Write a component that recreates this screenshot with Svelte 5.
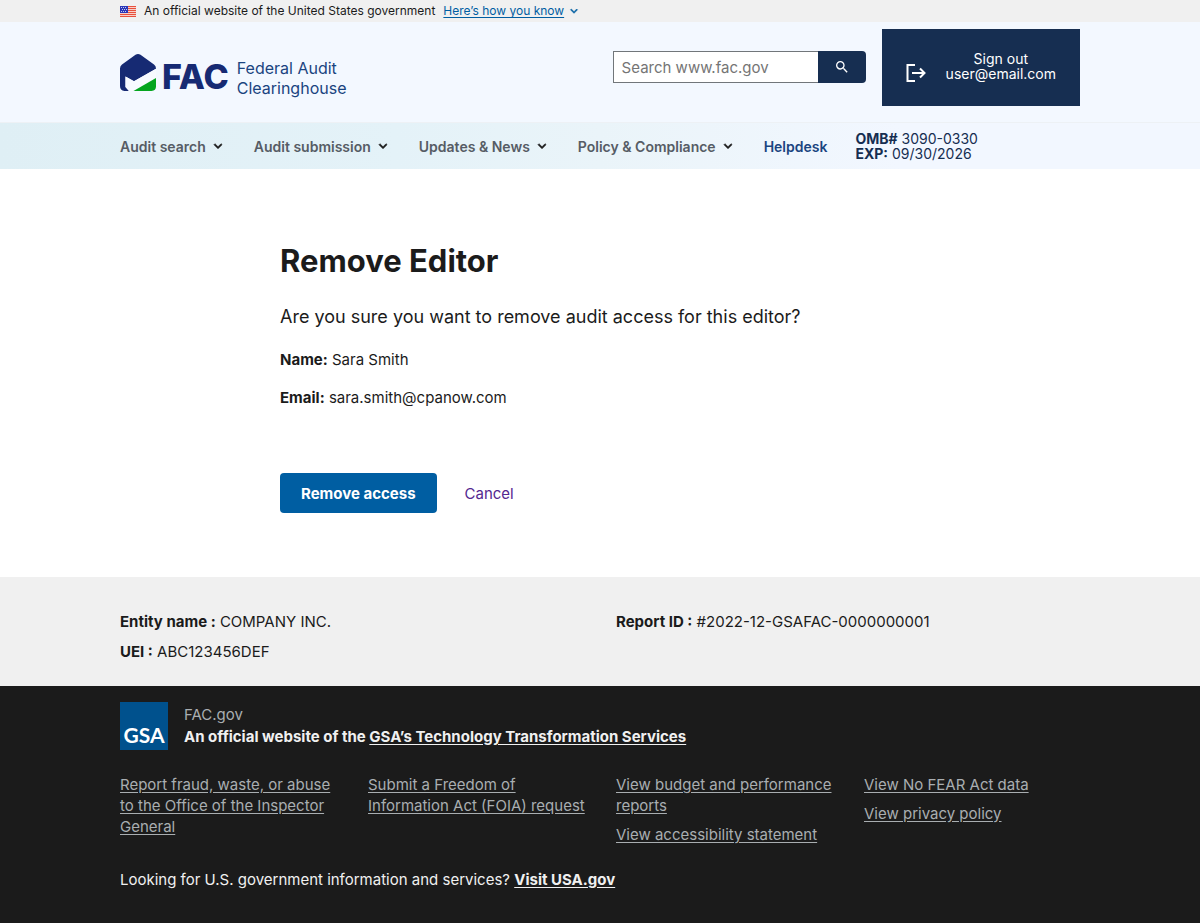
<script>
  const menus = ['Audit search', 'Audit submission', 'Updates & News', 'Policy & Compliance'];

  const footerColumns = [
    ['Report fraud, waste, or abuse to the Office of the Inspector General'],
    ['Submit a Freedom of Information Act (FOIA) request'],
    ['View budget and performance reports', 'View accessibility statement'],
    ['View No FEAR Act data', 'View privacy policy']
  ];
</script>

{#snippet chevron(size)}
  <svg class="chevron" width={size} height={size} viewBox="0 0 24 24" aria-hidden="true">
    <path d="M16.59 8.59 12 13.17 7.41 8.59 6 10l6 6 6-6z" fill="currentColor" stroke="currentColor" stroke-width="1" />
  </svg>
{/snippet}

<section class="banner" aria-label="Official website of the United States government">
  <div class="container banner-row">
    <svg class="flag" width="16" height="11" viewBox="0 0 16 11" aria-hidden="true">
      <rect width="16" height="11" fill="#f7cfc8" />
      {#each [0, 2, 4, 6, 8, 10] as y}
        <rect {y} width="16" height="1" fill="#e8503c" />
      {/each}
      <rect width="8" height="7" fill="#2a37b8" />
      {#each [1, 3, 5] as y}
        {#each [1, 3, 5] as x}
          <rect x={x + (y === 3 ? 1 : 0)} {y} width="1" height="1" fill="#c5caf0" />
        {/each}
      {/each}
    </svg>
    <span>An official website of the United States government</span>
    <button class="how" type="button"><span>Here’s how you know</span>{@render chevron(14)}</button>
  </div>
</section>

<header class="header">
  <div class="container header-row">
    <a class="brand" href="#home">
      <svg width="36" height="37" viewBox="0 0 36 37" aria-hidden="true">
        <path d="M15.5.8Q18-.8 20.500.8L34 10.500Q36 12 36 14.500V14.800L14 27.200 5.500 22.600V33L9 37H4.500Q0 36.500 0 32V14.500Q0 12 2 10.500Z" fill="#162a73" />
        <path d="M5.500 22.600 14 27.200 36 14.800V24L13.500 37H9L5.500 33Z" fill="#f7faff" />
        <path d="M36 24V32.500Q36 36.500 31.500 37H13.500Z" fill="#04a51f" />
      </svg>
      <span class="mark">FAC</span>
      <span class="brand-name">Federal Audit<br />Clearinghouse</span>
    </a>
    <form class="search" role="search" onsubmit={(e) => e.preventDefault()}>
      <input type="search" aria-label="Search www.fac.gov" placeholder="Search www.fac.gov" />
      <button type="submit" aria-label="Search">
        <svg width="16" height="16" viewBox="0 0 24 24" aria-hidden="true">
          <path fill="#fff" d="M15.500 14h-.79l-.28-.27A6.470 6.470 0 0 0 16 9.500 6.500 6.500 0 1 0 9.500 16c1.610 0 3.090-.59 4.230-1.570l.27.28v.79l5 4.990L20.490 19l-4.990-5zm-6 0C7.010 14 5 11.990 5 9.500S7.010 5 9.500 5 14 7.010 14 9.500 11.990 14 9.500 14z" />
        </svg>
      </button>
    </form>
    <button class="signout" type="button">
      <svg width="20" height="18" viewBox="0 0 20 18" fill="none" stroke="#fff" stroke-width="2" aria-hidden="true">
        <path d="M9 1H1.500V17H9" />
        <path d="M6 9H18" />
        <path d="M14 4.500 18.500 9 14 13.500" />
      </svg>
      <span>Sign out<br />user@email.com</span>
    </button>
  </div>
</header>

<nav class="nav" aria-label="Primary">
  <div class="container nav-row">
    {#each menus as menu}
      <button type="button" aria-expanded="false"><span>{menu}</span>{@render chevron(16)}</button>
    {/each}
    <a href="#helpdesk">Helpdesk</a>
    <p class="omb"><b>OMB#</b> 3090-0330<br /><b>EXP:</b> 09/30/2026</p>
  </div>
</nav>

<main>
  <div class="container">
    <div class="content">
      <h1>Remove Editor</h1>
      <p class="lead">Are you sure you want to remove audit access for this editor?</p>
      <p><b>Name:</b> Sara Smith</p>
      <p><b>Email:</b> sara.smith@cpanow.com</p>
      <div class="actions">
        <button type="button">Remove access</button>
        <a href="#cancel">Cancel</a>
      </div>
    </div>
  </div>
</main>

<section class="entity" aria-label="Submission details">
  <div class="container entity-grid">
    <div>
      <p><b>Entity name :</b> COMPANY INC.</p>
      <p><b>UEI :</b> ABC123456DEF</p>
    </div>
    <div>
      <p><b>Report ID :</b> #2022-12-GSAFAC-0000000001</p>
    </div>
  </div>
</section>

<footer>
  <div class="container">
    <div class="identity">
      <div class="gsa">
        <span>GSA</span>
      </div>
      <div>
        <p class="domain">FAC.gov</p>
        <p class="agency">An official website of the <a href="#tts">GSA’s Technology Transformation Services</a></p>
      </div>
    </div>
    <div class="links">
      {#each footerColumns as column}
        <ul>
          {#each column as link}
            <li><a href="#link">{link}</a></li>
          {/each}
        </ul>
      {/each}
    </div>
    <p class="usa">Looking for U.S. government information and services? <a href="#usa">Visit USA.gov</a></p>
  </div>
</footer>

<style>
  :global(body) {
    background: #1b1b1b;
    color: #1b1b1b;
    font-family: 'Inter', 'Liberation Sans', sans-serif;
    font-size: 16px;
  }
  p, h1, ul {
    margin: 0;
    padding: 0;
  }
  button, input {
    font: inherit;
    margin: 0;
    border: 0;
    border-radius: 0;
  }
  button {
    cursor: pointer;
  }
  .container {
    box-sizing: border-box;
    max-width: 1024px;
    margin: 0 auto;
    padding: 0 32px;
  }
  .chevron {
    flex: none;
    display: block;
  }

  .banner {
    background: #f0f0f0;
    font-size: 12px;
    line-height: 22px;
  }
  .banner-row {
    display: flex;
    align-items: center;
    gap: 8px;
  }
  .how {
    display: flex;
    align-items: center;
    gap: 3px;
    padding: 0;
    background: none;
    color: #005ea2;
  }
  .how span {
    text-decoration: underline;
    text-underline-offset: 2px;
  }

  .header {
    background: #f3f8ff;
    border-bottom: 1px solid #edf1f5;
  }
  .header-row {
    display: flex;
    align-items: flex-start;
    gap: 16px;
    padding-top: 7px;
    padding-bottom: 16px;
  }
  .brand {
    display: flex;
    align-items: flex-start;
    margin: 25px auto 0 0;
    color: #1a4480;
    text-decoration: none;
  }
  .mark {
    margin: 4px 8px 0 6px;
    color: #162a73;
    font-size: 34px;
    font-weight: 800;
    line-height: 37px;
  }
  .brand-name {
    margin-top: 4px;
    font-size: 16px;
    line-height: 20px;
  }
  .search {
    display: flex;
    margin-top: 22px;
  }
  .search input {
    box-sizing: border-box;
    width: 205px;
    height: 32px;
    padding: 0 8px;
    border: 1px solid #71767a;
    border-right: 0;
    background: #fff;
    font-size: 15px;
    appearance: none;
  }
  .search input::placeholder {
    color: #757575;
  }
  .search button {
    display: grid;
    place-items: center;
    width: 48px;
    height: 32px;
    padding: 0;
    border-radius: 0 4px 4px 0;
    background: #162e51;
  }
  .signout {
    display: flex;
    align-items: center;
    gap: 20px;
    box-sizing: border-box;
    height: 77px;
    padding: 0 24px 4px;
    background: #162e51;
    color: #fff;
    font-size: 14px;
    line-height: 15px;
  }
  .signout svg {
    margin-top: 14px;
  }

  .nav {
    background: linear-gradient(90deg, #dfeff5 0%, #e4f2f8 33%, #eaf4f9 50%, #f2f7ff 75%);
  }
  .nav-row {
    display: flex;
    align-items: center;
    gap: 28px;
    min-height: 46px;
  }
  .nav-row button {
    display: flex;
    align-items: center;
    gap: 4px;
    padding: 0;
    background: none;
    color: #1b1b1b;
    font-size: 14px;
    font-weight: 600;
  }
  .nav-row button span {
    color: #565c65;
  }
  .nav-row a {
    color: #1a4480;
    font-size: 14px;
    font-weight: 600;
    text-decoration: none;
  }
  .omb {
    color: #162e51;
    font-size: 14px;
    line-height: 15px;
  }

  main {
    background: #fff;
    padding: 72px 0 64px;
  }
  .content {
    width: 66.6667%;
    margin: 0 auto;
  }
  h1 {
    font-size: 31px;
    line-height: 40px;
  }
  .content p {
    margin-top: 14px;
    font-size: 15px;
    line-height: 24px;
  }
  .content .lead {
    margin: 24px 0 19px;
    font-size: 18px;
    line-height: 24px;
  }
  .actions {
    display: flex;
    align-items: center;
    gap: 28px;
    margin-top: 63px;
  }
  .actions button {
    height: 40px;
    padding: 0 21px;
    border-radius: 4px;
    background: #005ea2;
    color: #fff;
    font-size: 15px;
    font-weight: 700;
  }
  .actions a {
    color: #54278f;
    font-size: 15px;
    text-decoration: none;
  }

  .entity {
    background: #f0f0f0;
    padding: 30px 0 19px;
    font-size: 15px;
    line-height: 30px;
  }
  .entity-grid {
    display: grid;
    grid-template-columns: 1fr 1fr;
    gap: 32px;
  }

  footer {
    background: #1b1b1b;
    color: #f0f0f0;
    padding: 16px 0 32px;
    font-size: 15px;
  }
  .identity {
    display: flex;
    align-items: center;
    gap: 16px;
    line-height: 22px;
  }
  .gsa {
    display: flex;
    align-items: flex-end;
    justify-content: center;
    width: 48px;
    height: 48px;
    background: #00518d;
    color: #fff;
    font-family: 'Lato', sans-serif;
    font-size: 21px;
    font-weight: 700;
    line-height: 30px;
  }
  .domain {
    color: #a9aeb1;
  }
  .agency {
    font-weight: 700;
  }
  .agency a, .usa a {
    color: #f0f0f0;
    font-weight: 700;
    text-underline-offset: 2px;
  }
  .links {
    display: grid;
    grid-template-columns: repeat(4, 1fr);
    margin: 24px -32px 0 0;
  }
  .links ul {
    padding-right: 24px;
    list-style: none;
    line-height: 21px;
  }
  .links li + li {
    margin-top: 8px;
  }
  .links a {
    color: #a9aeb1;
    text-underline-offset: 2px;
  }
  .usa {
    margin-top: 24px;
    line-height: 22px;
  }
</style>
